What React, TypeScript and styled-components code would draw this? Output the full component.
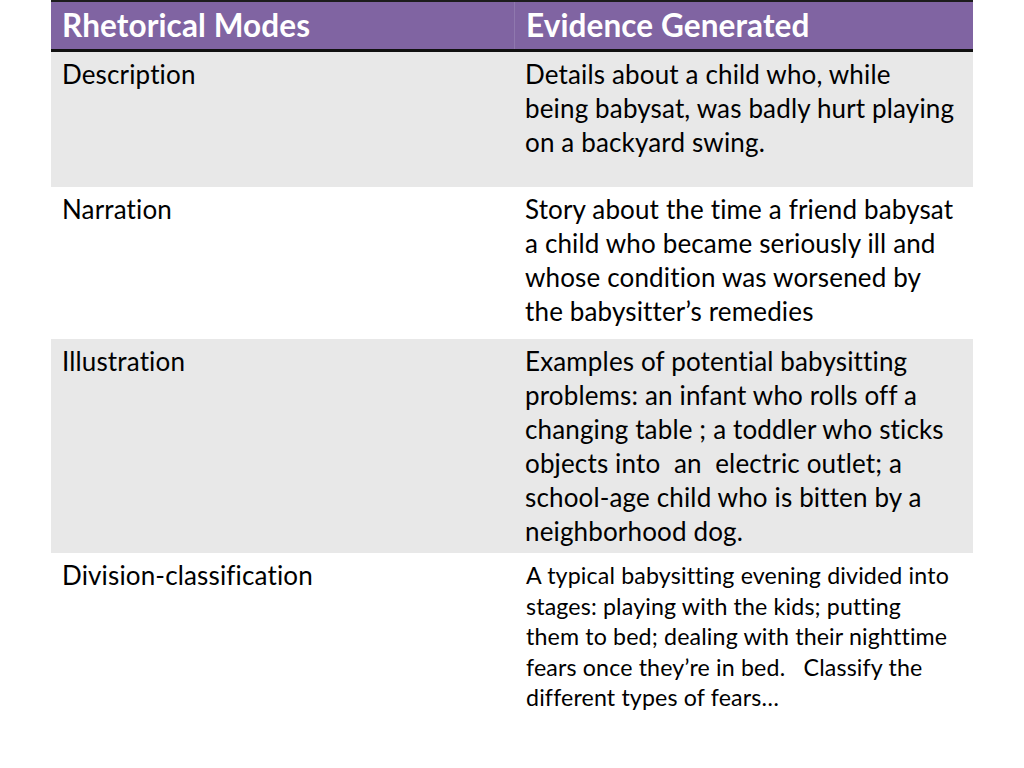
import styled, { createGlobalStyle } from "styled-components";

const GlobalStyle = createGlobalStyle`
  html, body {
    margin: 0;
    padding: 0;
    background: #ffffff;
  }
  body {
    font-family: Lato, "Open Sans", sans-serif;
  }
`;

interface RowI {
  mode: string;
  evidence: string[];
  shade: boolean;
  height: number;
  small?: boolean;
}

const rows: RowI[] = [
  {
    mode: "Description",
    evidence: [
      "Details about a child who, while",
      "being babysat, was badly hurt playing",
      "on a backyard swing.",
    ],
    shade: true,
    height: 135,
  },
  {
    mode: "Narration",
    evidence: [
      "Story about the time a friend babysat",
      "a child who became seriously ill and",
      "whose condition was worsened by",
      "the babysitter\u2019s remedies",
    ],
    shade: false,
    height: 152,
  },
  {
    mode: "Illustration",
    evidence: [
      "Examples of potential babysitting",
      "problems: an infant who rolls off a",
      "changing table ; a toddler who sticks",
      "objects into  an  electric outlet; a",
      "school-age child who is bitten by a",
      "neighborhood dog.",
    ],
    shade: true,
    height: 214,
  },
  {
    mode: "Division-classification",
    evidence: [
      "A typical babysitting evening divided into",
      "stages: playing with the kids; putting",
      "them to bed; dealing with their nighttime",
      "fears once they\u2019re in bed.   Classify the",
      "different types of fears\u2026",
    ],
    shade: false,
    height: 170,
    small: true,
  },
];

export default function App() {
  return (
    <>
      <GlobalStyle />
      <Page>
        <Table>
          <Header>
            <HeadCell>Rhetorical Modes</HeadCell>
            <HeadCell divider>Evidence Generated</HeadCell>
          </Header>
          {rows.map((r) => (
            <Row key={r.mode} shade={r.shade} h={r.height}>
              <Cell>{r.mode}</Cell>
              <Cell small={r.small}>
                {r.evidence.map((line) => (
                  <Line key={line}>{line}</Line>
                ))}
              </Cell>
            </Row>
          ))}
        </Table>
      </Page>
    </>
  );
}

const Page = styled.div`
  width: 1024px;
  height: 768px;
  padding-left: 51px;
  box-sizing: border-box;
`;

const Table = styled.div`
  width: 922px;
  display: flex;
  flex-direction: column;
  border-top: 2px solid #1c1c1c;
`;

const Header = styled.div`
  display: grid;
  grid-template-columns: 463px 1fr;
  height: 47px;
  background-color: #8064a2;
  border-bottom: 3px solid #111111;
`;

const HeadCell = styled.div.withConfig({
  shouldForwardProp: (prop) => prop !== "divider",
})<{ divider?: boolean }>`
  color: #ffffff;
  font-weight: 700;
  font-size: 31.5px;
  letter-spacing: 0.1px;
  line-height: 47px;
  padding-left: 11px;
  border-left: ${(p) => (p.divider ? "1px solid #8f78ae" : "none")};
  white-space: nowrap;
`;

const Row = styled.div.withConfig({
  shouldForwardProp: (prop) => !["shade", "h"].includes(prop),
})<{ shade: boolean; h: number }>`
  display: grid;
  grid-template-columns: 463px 1fr;
  height: ${(p) => p.h}px;
  background-color: ${(p) => (p.shade ? "#e8e8e8" : "#ffffff")};
  box-sizing: border-box;
`;

const Cell = styled.div.withConfig({
  shouldForwardProp: (prop) => prop !== "small",
})<{ small?: boolean }>`
  color: #000000;
  font-size: ${(p) => (p.small ? "23.2px" : "26px")};
  letter-spacing: 0.15px;
  line-height: ${(p) => (p.small ? "30.6px" : "34px")};
  padding: ${(p) => (p.small ? "7px 12px" : "5px 11px")};
  padding-left: ${(p) => (p.small ? "12px" : "11px")};
`;

const Line = styled.span`
  display: block;
  white-space: pre;
`;
